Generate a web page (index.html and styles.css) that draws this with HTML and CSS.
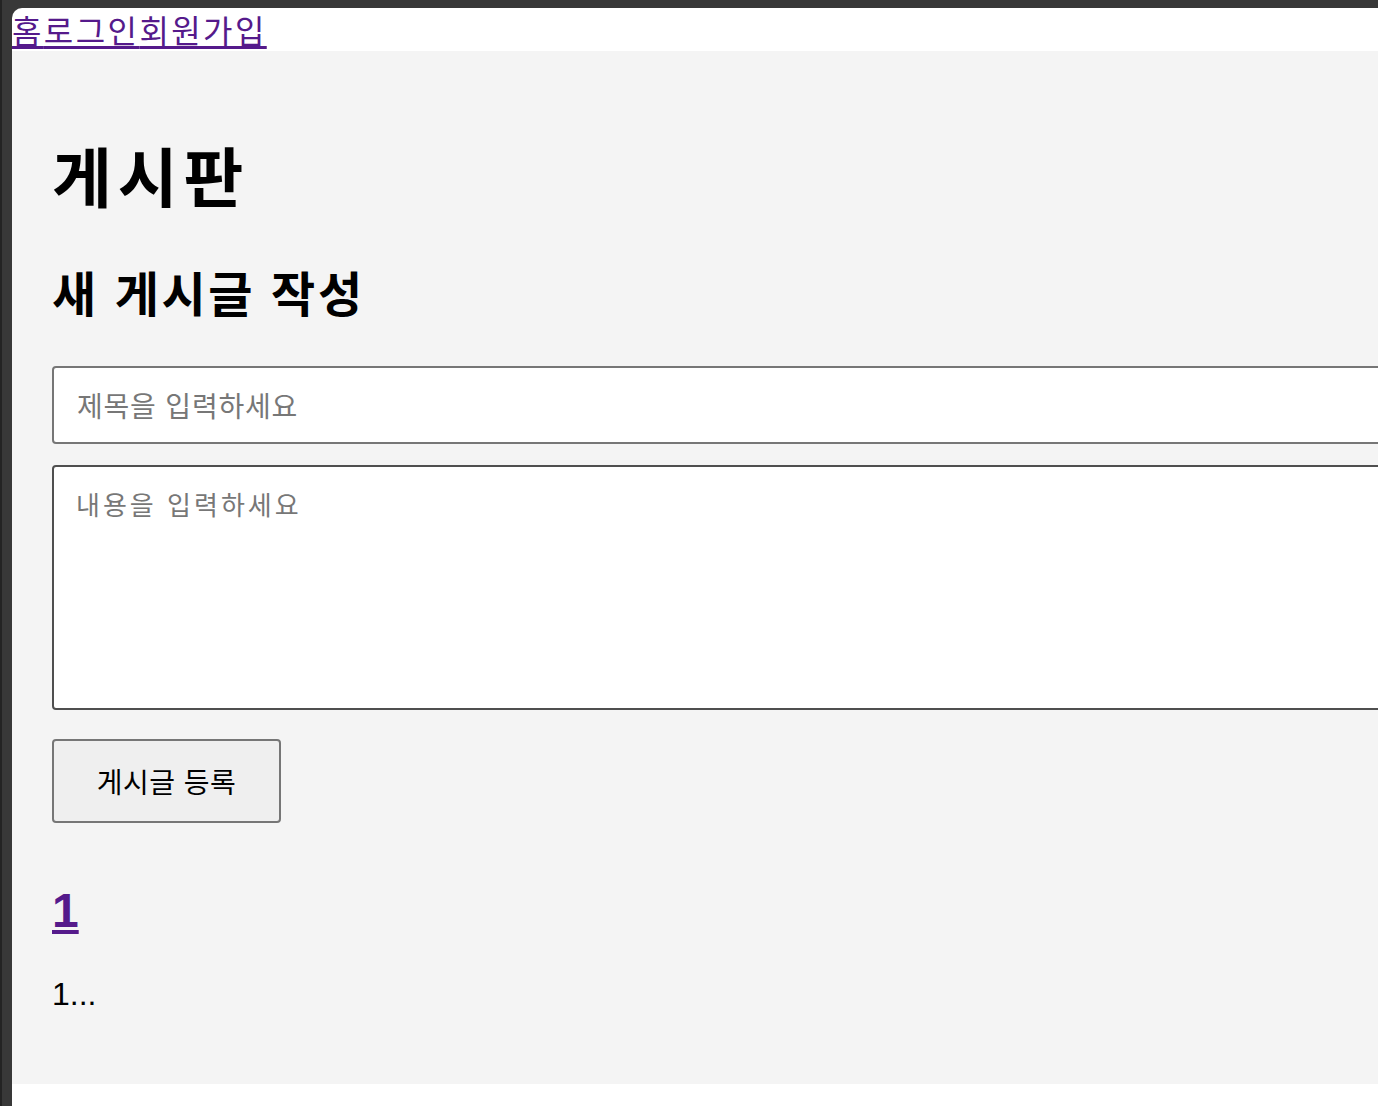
FILE: index.html
```html
<!DOCTYPE html>
<html lang="ko">
<head>
<meta charset="utf-8">
<title>게시판</title>
<link rel="stylesheet" href="styles.css">
</head>
<body>
<div class="window">
  <nav class="nav"><a href="#" class="nav-link">홈</a><a href="#" class="nav-link">로그인</a><a href="#" class="nav-link">회원가입</a></nav>
  <main class="board">
    <h1 class="board-title">게시판</h1>
    <h2 class="form-title">새 게시글 작성</h2>
    <form class="post-form">
      <input class="field field-title" type="text" placeholder="제목을 입력하세요">
      <textarea class="field field-body" placeholder="내용을 입력하세요"></textarea>
      <button class="submit" type="button">게시글 등록</button>
    </form>
    <article class="post">
      <h3 class="post-title"><a href="#" class="post-link">1</a></h3>
      <p class="post-excerpt">1...</p>
    </article>
  </main>
</div>
</body>
</html>
```

FILE: styles.css
```css
html {
  overflow: hidden;
  background: #383838;
}
body {
  margin: 0;
  border-left: 2px solid #232323;
  min-height: 1106px;
  box-sizing: border-box;
  font-family: "Noto Sans CJK KR", "Liberation Sans", sans-serif;
}
.window {
  margin: 8px 0 0 10px;
  background: #ffffff;
  border-top-left-radius: 10px;
  height: 1098px;
}
.nav {
  height: 43px;
  display: flex;
  align-items: flex-start;
}
.nav-link {
  font-size: 32px;
  line-height: 42px;
  letter-spacing: 2.4px;
  color: #551a8b;
  text-decoration: underline;
  text-underline-offset: 3px;
}
.board {
  background: #f4f4f4;
  height: 1033px;
  box-sizing: border-box;
  padding: 40px 0 0 40px;
  overflow: hidden;
}
.board-title {
  font-size: 65px;
  line-height: 77px;
  margin: 45px 0 0;
  font-weight: 700;
  letter-spacing: 6px;
  color: #000;
}
.form-title {
  font-size: 48px;
  line-height: 58px;
  margin: 49px 0 0;
  font-weight: 700;
  letter-spacing: 2.6px;
  color: #000;
}
.post-form {
  display: flex;
  flex-direction: column;
  align-items: flex-start;
  margin-top: 46px;
}
.field {
  box-sizing: border-box;
  width: 1420px;
  flex-shrink: 0;
  background: #fff;
  border-radius: 4px;
  font-family: "Noto Sans CJK KR", sans-serif;
  color: #000;
  outline: none;
}
.field::placeholder {
  color: #777;
}
.field-title {
  height: 78px;
  border: 2px solid #767676;
  padding: 0 23px;
  font-size: 28px;
  letter-spacing: 0.8px;
}
.field-body {
  height: 245px;
  margin-top: 21px;
  border: 2px solid #4f4f4f;
  padding: 18px 22px;
  resize: none;
  font-size: 26px;
  letter-spacing: 3px;
}
.submit {
  margin-top: 29px;
  width: 229px;
  height: 84px;
  background: #efefef;
  border: 2px solid #767676;
  border-radius: 4px;
  font-family: "Noto Sans CJK KR", sans-serif;
  font-size: 28px;
  letter-spacing: 0.5px;
  color: #000;
}
.post {
  margin-top: 60px;
}
.post-title {
  margin: 0;
  font-family: "Liberation Sans", sans-serif;
  font-size: 48px;
  line-height: 56px;
  font-weight: 700;
}
.post-link {
  color: #551a8b;
}
.post-excerpt {
  margin: 37px 0 0;
  font-family: "Liberation Sans", sans-serif;
  font-size: 32px;
  line-height: 37px;
  color: #000;
}
```
